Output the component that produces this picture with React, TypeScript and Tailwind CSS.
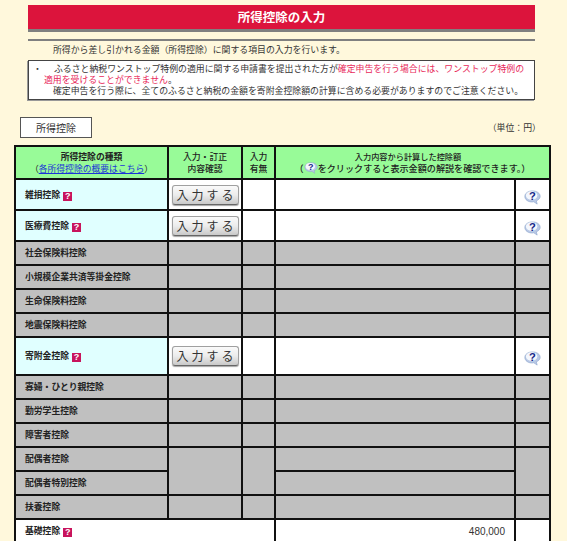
import React from "react";

const font = { fontFamily: '"Noto Sans CJK JP", sans-serif' };

function Help() {
  return (
    <span className="inline-flex items-center justify-center w-[9px] h-[9px] bg-[#c8145c] text-white text-[9px] leading-none font-bold ml-[3px] align-[-1px] font-['Liberation_Sans']">?</span>
  );
}

function Bubble({ small }: { small?: boolean }) {
  return (
    <svg width={small ? 14 : 17} height={small ? 12 : 15} viewBox="0 0 16 14" className={small ? "inline-block align-[-2px]" : "inline-block"}>
      <path d="M8 0.8C3.8 0.8 0.8 3 0.8 6s3 5.2 6.6 5.2c.6 0 1.2 0 1.8-.2l3.2 2.2-.8-3c2-1 3.6-2.4 3.6-4.2C15.2 3 12.2.8 8 .8z" fill="#b9c9e6" stroke="#8ea5cd" strokeWidth="0.6" />
      <ellipse cx="7.2" cy="5.2" rx="5.4" ry="4" fill="#f4f7fc" />
      <text x="7.8" y="9.6" textAnchor="middle" fontSize="10.5" fontWeight="700" fill="#14278a" fontFamily="Liberation Sans">?</text>
    </svg>
  );
}

function InputButton() {
  return (
    <button className="w-[67px] h-[20px] rounded-[3px] border border-[#a0a0a0] border-b-[#666] bg-gradient-to-b from-[#fafafa] via-[#ececec] to-[#c9c9c9] text-[12px] leading-none tracking-[3px] pl-[3px] text-[#333] flex items-center justify-center mx-auto shadow-[0_1px_1px_rgba(0,0,0,0.35)]">
      入力する
    </button>
  );
}

type RowProps = { name: string; h: string };

const cell = "border-[2px] border-[#111]";
const gray = "border-[2px] border-[#111] bg-[#c0c0c0]";
const label = "pl-[9px] text-[8.8px] font-bold text-[#222]";

function ActiveRow({ name, h }: RowProps) {
  return (
    <tr className={h}>
      <td className={`${cell} bg-[#e0ffff] ${label}`}>{name}<Help /></td>
      <td className={`${cell} bg-white`}><InputButton /></td>
      <td className={`${cell} bg-white`}></td>
      <td className={`${cell} bg-white`}></td>
      <td className={`${cell} bg-white text-center`}><Bubble /></td>
    </tr>
  );
}

function GrayRow({ name }: { name: string }) {
  return (
    <tr className="h-[24px]">
      <td className={`${gray} ${label}`}>{name}</td>
      <td className={gray}></td>
      <td className={gray}></td>
      <td className={gray}></td>
      <td className={gray}></td>
    </tr>
  );
}

export default function App() {
  return (
    <div className="w-[567px] h-[541px] overflow-hidden bg-[#fff8dc] text-[#333]" style={font}>
      <div className="pl-[28px] pr-[32px] pt-[5px]">
        <div className="h-[27px] bg-[#dc143c] border-b-[3px] border-[#808080] flex items-center justify-center text-white font-bold text-[12.5px]">
          所得控除の入力
        </div>
        <div className="mt-[7px] border-t-[2px] border-[#808080] pl-[25px] pt-[2px] text-[8.9px] leading-[13px]">
          所得から差し引かれる金額（所得控除）に関する項目の入力を行います。
        </div>
        <div className="mt-[4px] h-[40px] border border-[#444] bg-white pl-[15px] pr-[2px] pt-[2px] text-[8.9px] leading-[11px] shadow-[-1px_1px_0_#999]">
          <div className="flex">
            <span className="w-[10px] shrink-0 -ml-[11px] mr-[11px]">・</span>
            <span className="whitespace-nowrap">ふるさと納税ワンストップ特例の適用に関する申請書を提出された方が<span className="text-[#e8285a]">確定申告を行う場合には、ワンストップ特例の</span></span>
          </div>
          <div className="text-[#e8285a]">適用を受けることができません<span className="text-[#333]">。</span></div>
          <div className="pl-[9px] whitespace-nowrap">確定申告を行う際に、全てのふるさと納税の金額を寄附金控除額の計算に含める必要がありますのでご注意ください。</div>
        </div>
      </div>
      <div className="flex items-center justify-between pl-[20px] pr-[26px] mt-[17px]">
        <div className="w-[72px] h-[21px] border border-[#555] bg-white flex items-center justify-center text-[10px]">所得控除</div>
        <div className="text-[8.9px]">（単位：円）</div>
      </div>
      <div className="pl-[14px] mt-[7px]">
        <table className="border-collapse table-fixed w-[535px] border-[2px] border-[#333]">
          <colgroup>
            <col className="w-[153px]" />
            <col className="w-[74px]" />
            <col className="w-[33px]" />
            <col className="w-[240px]" />
            <col className="w-[35px]" />
          </colgroup>
          <tbody>
            <tr className="h-[33px] bg-[#98fb98] text-center text-[8.8px] leading-[11.5px] text-[#222]">
              <td className={cell}><span className="font-bold">所得控除の種類</span><br />（<span className="text-[#1a33d8] underline">各所得控除の概要はこちら</span>）</td>
              <td className={`${cell} font-medium`}>入力・訂正<br />内容確認</td>
              <td className={`${cell} font-medium`}>入力<br />有無</td>
              <td colSpan={2} className={`${cell} font-medium`}>
                <span className="text-[8.2px] pr-[9px]">入力内容から計算した控除額</span><br />
                <span className="text-[9.1px] whitespace-nowrap">（<Bubble small />をクリックすると表示金額の解説を確認できます。）</span>
              </td>
            </tr>
            <ActiveRow name="雑損控除" h="h-[31px]" />
            <ActiveRow name="医療費控除" h="h-[31px]" />
            <GrayRow name="社会保険料控除" />
            <GrayRow name="小規模企業共済等掛金控除" />
            <GrayRow name="生命保険料控除" />
            <GrayRow name="地震保険料控除" />
            <ActiveRow name="寄附金控除" h="h-[38px]" />
            <GrayRow name="寡婦・ひとり親控除" />
            <GrayRow name="勤労学生控除" />
            <GrayRow name="障害者控除" />
            <tr className="h-[24px]">
              <td className={`${gray} ${label}`}>配偶者控除</td>
              <td rowSpan={2} className={gray}></td>
              <td rowSpan={2} className={gray}></td>
              <td className={gray}></td>
              <td rowSpan={2} className={gray}></td>
            </tr>
            <tr className="h-[24px]">
              <td className={`${gray} ${label}`}>配偶者特別控除</td>
              <td className={gray}></td>
            </tr>
            <GrayRow name="扶養控除" />
            <tr className="h-[24px]">
              <td colSpan={3} className={`${cell} bg-white ${label}`}>基礎控除<Help /></td>
              <td className={`${cell} bg-white text-right pr-[9px] text-[10px] font-['Liberation_Sans']`}>480,000</td>
              <td className={`${cell} bg-white`}></td>
            </tr>
          </tbody>
        </table>
      </div>
    </div>
  );
}
